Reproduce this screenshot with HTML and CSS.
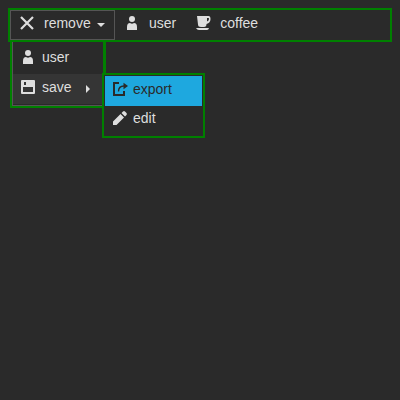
FILE: index.html
```
<!DOCTYPE html>
<html lang="en">
<head>
<meta charset="utf-8">
<title>Menu</title>
<link rel="stylesheet" href="styles.css">
</head>
<body>
<nav class="menubar">
  <div class="item root open">
    <svg class="icon" viewBox="0 0 14 14"><path d="M1 1l12 12M13 1L1 13" fill="none" stroke="currentColor" stroke-width="2.2"/></svg>
    <span>remove</span>
    <svg class="caret" viewBox="0 0 8 4"><path d="M0 0h8L4 4z"/></svg>
    <div class="submenu first">
      <div class="item">
        <svg class="icon" viewBox="0 0 14 14"><circle cx="7" cy="3" r="3"/><path d="M2 14V11Q2 7 5 7Q7 8.500 9 7Q12 7 12 11V14z"/></svg>
        <span>user</span>
      </div>
      <div class="item active">
        <svg class="icon" viewBox="0 0 14 14"><path fill-rule="evenodd" d="M1 0H13Q14 0 14 1V13Q14 14 13 14H1Q0 14 0 13V1Q0 0 1 0zM2 7V12H12V7zM3 2V5H5V2z"/></svg>
        <span>save</span>
        <svg class="arrow" viewBox="0 0 4 8"><path d="M0 0v8L4 4z"/></svg>
      </div>
    </div>
    <div class="submenu second">
      <div class="item selected">
        <svg class="icon" viewBox="0 0 14 14"><path d="M6 1H1V13H11V9" fill="none" stroke="currentColor" stroke-width="2"/><path d="M5.500 9.500Q5.500 4 11 4" fill="none" stroke="currentColor" stroke-width="1.400"/><path d="M10.500 0.800L15 4L10.500 7.200z"/></svg>
        <span>export</span>
      </div>
      <div class="item last">
        <svg class="icon" viewBox="0 0 14 14"><path d="M0 14V10.500L7.500 3L11 6.500L3.500 14zM8.500 2L10 .5Q11 -.3 12 .5L13.500 2Q14.300 3 13.500 4L12 5.500z"/></svg>
        <span>edit</span>
      </div>
    </div>
  </div>
  <div class="item root">
    <svg class="icon" viewBox="0 0 14 14"><circle cx="7" cy="3" r="3"/><path d="M2 14V11Q2 7 5 7Q7 8.500 9 7Q12 7 12 11V14z"/></svg>
    <span>user</span>
  </div>
  <div class="item root">
    <svg class="icon" viewBox="0 0 14 14"><path fill-rule="evenodd" d="M1 0H12.500Q14.500 0 14.500 3Q14.500 7 10.500 8Q10.500 11 8 11H5Q2 11 2 8.500zM11 2V5.500Q13 4.500 13 3Q13 2 12.500 2zM0 12H13Q12.500 14 11 14H3Q1 14 0 12z"/></svg>
    <span>coffee</span>
  </div>
</nav>
</body>
</html>
```
FILE: styles.css
```
* {
  box-sizing: border-box;
}

body {
  margin: 0;
  padding: 8px;
  min-height: 100vh;
  background: #2a2a2a;
  color: #dedede;
  font: 14px/16px "Liberation Sans", Arial, sans-serif;
}

.menubar {
  display: flex;
  height: 34px;
  border: 2px solid #008000;
}

.item {
  display: flex;
  align-items: center;
  white-space: nowrap;
}

.root {
  position: relative;
  height: 30px;
  padding: 0 10px 4px;
  gap: 10px;
}

.open {
  width: 105px;
  padding: 0 9px 4px;
  border: 1px solid #555;
}

.icon {
  flex: none;
  width: 14px;
  height: 14px;
  fill: currentColor;
  overflow: visible;
}

.caret {
  width: 8px;
  height: 4px;
  margin: 4px 0 0 -4px;
  fill: currentColor;
}

.submenu {
  position: absolute;
  border: 2px solid #008000;
  background: #2a2a2a;
}

.submenu .item {
  height: 30px;
  gap: 6px;
}

.first {
  left: -1px;
  top: 29px;
  width: 96px;
  height: 68px;
  padding: 2px 1px 1px;
  border-right-width: 3px;
  box-shadow: inset 1px -1px #555;
}

.first .item {
  padding: 0 8px 4px;
  gap: 7px;
}

.active {
  background: #353535;
}

.arrow {
  width: 4px;
  height: 8px;
  margin: 4px 0 0 7px;
  fill: currentColor;
}

.second {
  left: 91px;
  top: 62px;
  width: 103px;
  height: 65px;
  padding: 1px;
}

.second .item {
  padding: 0 8px 4px;
}

.second .last {
  padding-bottom: 6px;
}

.selected {
  background: #1ea8df;
  color: #2a2a2a;
}
```
